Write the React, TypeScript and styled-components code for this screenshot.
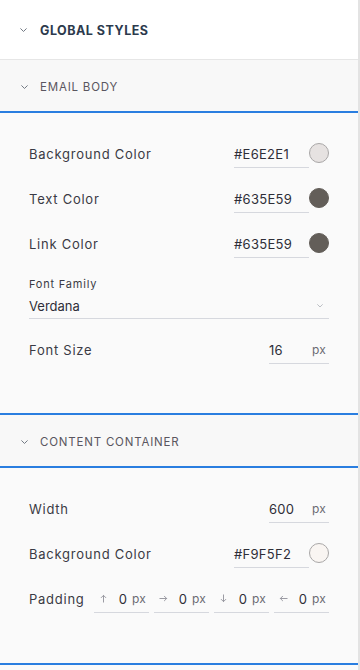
import styled, { createGlobalStyle } from 'styled-components';

const GlobalStyle = createGlobalStyle`
    html, body {
        margin: 0;
        padding: 0;
        background: #ffffff;
    }

    * {
        box-sizing: border-box;
    }
`;

const Panel = styled.div`
    width: 360px;
    min-height: 670px;
    background: #fafafa;
    border-right: 2px solid #e3e3e3;
    font-family: Inter, 'Liberation Sans', sans-serif;
    color: #3a3a44;
`;

const TopHeader = styled.div`
    height: 60px;
    background: #ffffff;
    border-bottom: 1px solid #e6e6e6;
    display: flex;
    align-items: center;
    gap: 13px;
    padding: 1px 0 0 20px;
    font-size: 12.5px;
    font-weight: 700;
    letter-spacing: 0.5px;
    color: #2c3a4d;
`;

const SectionHeader = styled.div`
    height: 53px;
    background: #f8f8f8;
    border-bottom: 2px solid #2a7ee0;
    display: flex;
    align-items: center;
    gap: 12px;
    padding: 3px 0 0 21px;
    font-size: 11.5px;
    letter-spacing: 0.8px;
    color: #5a5660;
`;

const SectionBody = styled.div<{ $bottom: number }>`
    background: #fafafa;
    padding: 27px 29px ${(p) => p.$bottom}px 29px;
    border-bottom: 2px solid #2a7ee0;
    display: flex;
    flex-direction: column;
    gap: 17px;
`;

const Row = styled.div`
    height: 28px;
    display: flex;
    align-items: center;
    justify-content: space-between;
`;

const Label = styled.span`
    font-size: 13px;
    letter-spacing: 0.75px;
    color: #3a3a44;
`;

const ColorGroup = styled.div`
    display: flex;
    align-items: center;
`;

const ValueBox = styled.div<{ $width: number }>`
    width: ${(p) => p.$width}px;
    height: 28px;
    border-bottom: 1px solid #d6d8de;
    display: flex;
    align-items: center;
    justify-content: space-between;
    font-size: 13px;
    letter-spacing: 0.3px;
    color: #2e2e38;
`;

const Swatch = styled.span<{ $color: string; $dark?: boolean }>`
    width: 20px;
    height: 20px;
    border-radius: 50%;
    background: ${(p) => p.$color};
    border: 1px solid ${(p) => (p.$dark ? p.$color : '#a9a7a7')};
    margin-top: -2px;
`;

const Unit = styled.span`
    font-size: 12px;
    color: #6a6a72;
    padding-right: 3px;
    letter-spacing: 0.2px;
`;

const SelectBlock = styled.div`
    display: flex;
    flex-direction: column;
`;

const SmallLabel = styled.span`
    font-size: 11px;
    line-height: 19px;
    letter-spacing: 0.8px;
    color: #3a3a44;
`;

const Select = styled.div`
    height: 25px;
    border-bottom: 1px solid #d6d8de;
    display: flex;
    align-items: center;
    justify-content: space-between;
    padding-right: 6px;
    font-size: 13px;
    color: #2e2e38;
`;

const PaddingGroup = styled.div`
    display: flex;
    gap: 5px;
`;

const PadBox = styled.div`
    width: 55px;
    height: 28px;
    border-bottom: 1px solid #d6d8de;
    display: flex;
    align-items: center;
    padding-left: 5px;
`;

const PadValue = styled.span`
    flex: 1;
    text-align: right;
    font-size: 13px;
    color: #2e2e38;
    padding-right: 5px;
`;

const Chevron = ({ color = '#6f7680', w = 7 }: { color?: string; w?: number }) => (
    <svg width={w} height={w * 0.6} viewBox="0 0 10 6" fill="none">
        <path d="M1 1l4 4 4-4" stroke={color} strokeWidth="1.4" strokeLinecap="round" strokeLinejoin="round" />
    </svg>
);

// small thin arrow, rotated per side
const PadArrow = ({ deg }: { deg: number }) => (
    <svg width="9" height="9" viewBox="0 0 10 10" fill="none" style={{ transform: `rotate(${deg}deg)` }}>
        <path d="M5 9V1.5M2.5 4L5 1.5 7.5 4" stroke="#9a9aa2" strokeWidth="1.1" strokeLinecap="round" strokeLinejoin="round" />
    </svg>
);

const ColorRow = ({ label, value, dark }: { label: string; value: string; dark?: boolean }) => (
    <Row>
        <Label>{label}</Label>
        <ColorGroup>
            <ValueBox $width={75}>{value}</ValueBox>
            <Swatch $color={value} $dark={dark} />
        </ColorGroup>
    </Row>
);

const NumberRow = ({ label, value }: { label: string; value: string }) => (
    <Row>
        <Label>{label}</Label>
        <ValueBox $width={60}>
            <span>{value}</span>
            <Unit>px</Unit>
        </ValueBox>
    </Row>
);

const pads = [0, 90, 180, 270];

const App = () => {
    return (
        <Panel>
            <GlobalStyle />
            <TopHeader>
                <Chevron />
                GLOBAL STYLES
            </TopHeader>

            <SectionHeader>
                <Chevron />
                EMAIL BODY
            </SectionHeader>
            <SectionBody $bottom={49}>
                <ColorRow label="Background Color" value="#E6E2E1" />
                <ColorRow label="Text Color" value="#635E59" dark />
                <ColorRow label="Link Color" value="#635E59" dark />
                <SelectBlock>
                    <SmallLabel>Font Family</SmallLabel>
                    <Select>
                        Verdana
                        <Chevron color="#b0b3ba" w={6} />
                    </Select>
                </SelectBlock>
                <NumberRow label="Font Size" value="16" />
            </SectionBody>

            <SectionHeader>
                <Chevron />
                CONTENT CONTAINER
            </SectionHeader>
            <SectionBody $bottom={50}>
                <NumberRow label="Width" value="600" />
                <ColorRow label="Background Color" value="#F9F5F2" />
                <Row>
                    <Label>Padding</Label>
                    <PaddingGroup>
                        {pads.map((d) => (
                            <PadBox key={d}>
                                <PadArrow deg={d} />
                                <PadValue>0</PadValue>
                                <Unit>px</Unit>
                            </PadBox>
                        ))}
                    </PaddingGroup>
                </Row>
            </SectionBody>
        </Panel>
    );
};

export default App;
